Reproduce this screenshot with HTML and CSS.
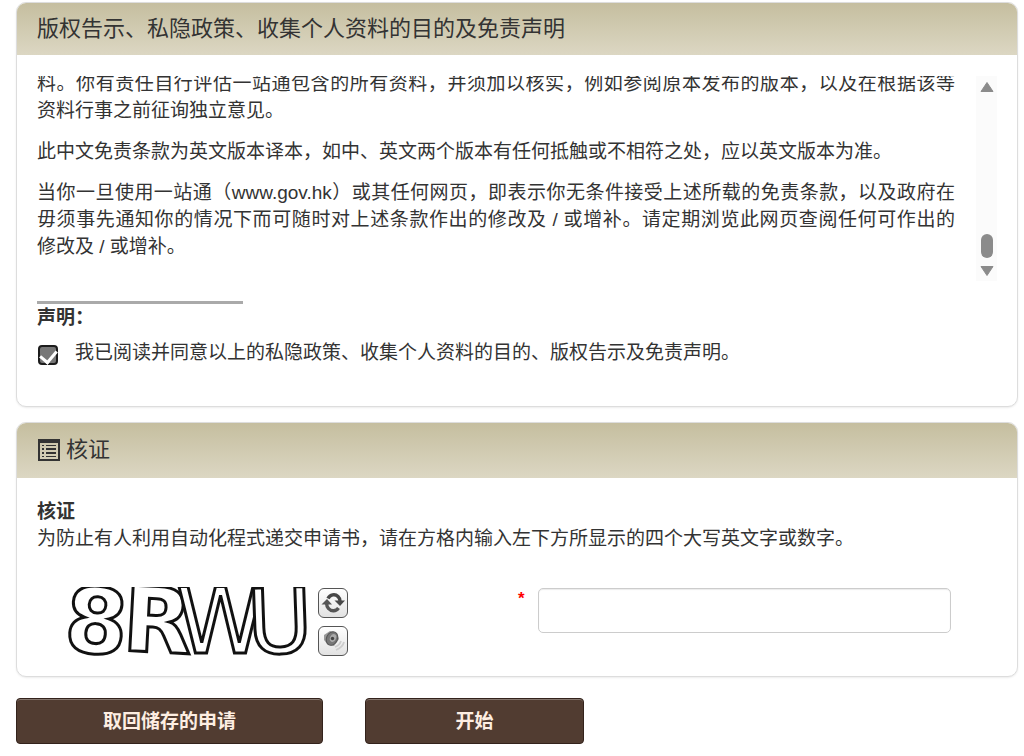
FILE: index.html
```
<!DOCTYPE html>
<html lang="zh-Hans">
<head>
    <meta charset="UTF-8">
    <meta name="viewport" content="width=device-width, initial-scale=1.0">
    <title>核证</title>
    <link rel="stylesheet" href="styles.css">
</head>
<body>
    <form class="page">
        <section class="panel">
            <h2 class="panel-title">版权告示、私隐政策、收集个人资料的目的及免责声明</h2>
            <div class="panel-body terms-body">
                <div class="terms">
                    <div class="terms-text">
                        <p><span class="full">料。你有责任自行评估一站通包含的所有资料，并须加以核实，例如参阅原本发布的版本，以及在根据该等</span>资料行事之前征询独立意见。</p>
                        <p>此中文免责条款为英文版本译本，如中、英文两个版本有任何抵触或不相符之处，应以英文版本为准。</p>
                        <p><span class="full">当你一旦使用一站通（www.gov.hk）或其任何网页，即表示你无条件接受上述所载的免责条款，以及政府在</span><span class="full">毋须事先通知你的情况下而可随时对上述条款作出的修改及 / 或增补。请定期浏览此网页查阅任何可作出的</span>修改及 / 或增补。</p>
                    </div>
                    <div class="scrollbar">
                        <svg width="14" height="10" viewBox="0 0 14 10"><path d="M7 0.5 L13 9.5 H1 Z" fill="#8b8b8b" stroke="#8b8b8b" stroke-linejoin="round"/></svg>
                        <div class="thumb"></div>
                        <svg width="14" height="10" viewBox="0 0 14 10"><path d="M7 9.5 L13 0.5 H1 Z" fill="#8b8b8b" stroke="#8b8b8b" stroke-linejoin="round"/></svg>
                    </div>
                </div>
                <hr class="divider">
                <h3 class="subtitle">声明：</h3>
                <div class="agree">
                    <input type="checkbox" id="agree" checked>
                    <label for="agree">我已阅读并同意以上的私隐政策、收集个人资料的目的、版权告示及免责声明。</label>
                </div>
            </div>
        </section>

        <section class="panel">
            <h2 class="panel-title verify-title">
                <svg width="22" height="22" viewBox="0 0 22 22" fill="#333">
                    <path d="M0 0H22V22H0Z M2 4V20H20V4Z" fill-rule="evenodd"/>
                    <path d="M4 6h2v1H4z M4 9h2v2H4z M4 13h2v2H4z M4 17h2v1H4z M8 6h10v1H8z M8 9h10v2H8z M8 13h10v2H8z M8 17h10v1H8z"/>
                </svg>
                核证
            </h2>
            <div class="panel-body verify-body">
                <h3 class="subtitle">核证</h3>
                <label class="hint" for="code">为防止有人利用自动化程式递交申请书，请在方格内输入左下方所显示的四个大写英文字或数字。</label>
                <div class="verify-row">
                    <div class="captcha">
                        <svg width="250" height="70" viewBox="0 0 250 70" class="captcha-image">
                            <text class="heavy" x="2" y="66" transform="rotate(4 34 35)">8</text>
                            <text class="heavy" x="60" y="65" transform="rotate(3 95 35)">R</text>
                            <text x="113" y="66">W</text>
                            <text x="184" y="66" transform="rotate(-2 215 35)">U</text>
                        </svg>
                        <div class="captcha-tools">
                            <button type="button" class="tool" aria-label="更新">
                                <svg width="26" height="26" viewBox="0 0 26 26">
                                    <path d="M8 8.5 C10 4.5 15 3.5 18 6.5 C19.5 8 20 9.5 20 11" fill="none" stroke="#484848" stroke-width="3.4"/>
                                    <path d="M14.5 10.5 H25 L20 16 Z" fill="#484848"/>
                                    <path d="M18.5 18 C16 21.5 11 21.5 8.5 18.5 C7 17 6.7 15.5 6.7 14" fill="none" stroke="#555" stroke-width="3.4"/>
                                    <path d="M1.5 14.5 H12 L7 9 Z" fill="#555"/>
                                </svg>
                            </button>
                            <button type="button" class="tool" aria-label="播放">
                                <svg width="26" height="26" viewBox="0 0 26 26">
                                    <path d="M4 7 L10 3 L17 5 L19 11 L14 18 L8 17 L4 12 Z" fill="#999"/>
                                    <ellipse cx="12" cy="10.5" rx="5.5" ry="7" transform="rotate(25 12 10.5)" fill="#777" stroke="#555"/>
                                    <ellipse cx="13" cy="10" rx="3" ry="4" transform="rotate(25 13 10)" fill="#aaa"/>
                                    <circle cx="12.5" cy="10.5" r="1.7" fill="#444"/>
                                    <path d="M15 19 C18 18 20 16 21 13 M16 22 C20 20.5 23 18 24 14" fill="none" stroke="#ccc" stroke-width="1.8"/>
                                </svg>
                            </button>
                        </div>
                    </div>
                    <div class="code-field">
                        <span class="required">*</span>
                        <input type="text" id="code" class="code-input" maxlength="4">
                    </div>
                </div>
            </div>
        </section>

        <div class="actions">
            <button type="button" class="btn btn-wide">取回储存的申请</button>
            <button type="submit" class="btn">开始</button>
        </div>
    </form>
</body>
</html>
```
FILE: styles.css
```
* {
    box-sizing: border-box;
}

body {
    margin: 0;
    background: #fff;
    color: #333;
    font-family: "Liberation Sans", "Noto Sans CJK SC", sans-serif;
    font-size: 19px;
    line-height: 27px;
}

svg {
    display: block;
}

.page {
    padding: 2px 6px 12px 16px;
}

/* Panels */
.panel {
    margin-bottom: 15px;
    border: 1px solid #ddd;
    border-radius: 10px;
    background: #fff;
    box-shadow: 0 1px 2px rgba(0, 0, 0, 0.08);
    overflow: hidden;
}

.panel-title {
    margin: 0;
    padding: 12px 20px;
    background: linear-gradient(#c5be9f, #dcd7c3);
    font-size: 22px;
    font-weight: 400;
    line-height: 28px;
}

.verify-title {
    display: flex;
    align-items: center;
    gap: 6px;
    padding: 13px 21px 14px;
}

.panel-body {
    padding: 20px;
}

.terms-body {
    padding-top: 21px;
    padding-bottom: 40px;
}

.verify-body {
    padding-bottom: 19px;
}

/* Terms */
.terms {
    display: flex;
    height: 205px;
    overflow: hidden;
}

.terms-text {
    flex: 1;
    display: flex;
    flex-direction: column;
    justify-content: flex-end;
    padding: 0 21px 7px 0;
}

.terms-text p {
    flex-shrink: 0;
    margin: 0 0 14px;
}

.full {
    display: block;
    text-align: justify;
    text-align-last: justify;
}

.scrollbar {
    display: flex;
    flex-direction: column;
    align-items: center;
    width: 21px;
    padding: 6px 0 5px;
    background: #fbfbfb;
}

.thumb {
    width: 12px;
    height: 24px;
    margin: auto 0 8px;
    border-radius: 6px;
    background: #8b8b8b;
}

.divider {
    width: 206px;
    height: 3px;
    margin: 20px 0 0;
    border: 0;
    background: #aaa;
}

.subtitle {
    margin: 0;
    font-size: 19px;
    font-weight: 700;
}

.agree {
    display: flex;
    align-items: center;
    gap: 17px;
    margin-top: 8px;
    padding-left: 1px;
}

.agree input {
    appearance: none;
    display: flex;
    justify-content: center;
    width: 20px;
    height: 20px;
    margin: 4px 0 0;
    border: 2px solid #1c1c1c;
    border-radius: 4px;
    background: #777;
}

.agree input:checked::before {
    content: "";
    width: 8px;
    height: 13px;
    border: solid #fff;
    border-width: 0 3px 3px 0;
    transform: rotate(40deg);
}

/* Verification */
.hint {
    display: block;
}

.verify-row {
    display: flex;
    justify-content: space-between;
    margin-top: 35px;
    padding: 0 46px 0 26px;
}

.captcha {
    display: flex;
    gap: 5px;
}

.captcha-image text {
    fill: #fff;
    stroke: #111;
    stroke-width: 3px;
    font-family: "DejaVu Sans", sans-serif;
    font-size: 90px;
}

.captcha-image .heavy {
    font-weight: 700;
}

.captcha-tools {
    display: flex;
    flex-direction: column;
    gap: 8px;
    padding-top: 1px;
}

.tool {
    width: 30px;
    height: 30px;
    padding: 1px;
    border: 1px solid #555;
    border-radius: 6px;
    background: linear-gradient(#fff, #e2e2e2);
}

.code-field {
    display: flex;
    gap: 13px;
    width: 433px;
}

.required {
    color: #f00;
    font-size: 17px;
    font-weight: 700;
    line-height: 24px;
}

.code-input {
    flex: 1;
    min-width: 0;
    height: 45px;
    margin-top: 1px;
    padding: 6px 12px;
    border: 1px solid #ccc;
    border-radius: 5px;
    font: inherit;
    box-shadow: inset 0 1px 1px rgba(0, 0, 0, 0.08);
}

/* Buttons */
.actions {
    display: flex;
    gap: 42px;
    padding-top: 6px;
}

.btn {
    width: 219px;
    height: 46px;
    border: 1px solid #33231c;
    border-radius: 4px;
    background: #513c31;
    box-shadow: inset 0 1px 0 #86776f;
    color: #fdeee2;
    font: inherit;
    font-weight: 700;
}

.btn-wide {
    width: 307px;
}
```
